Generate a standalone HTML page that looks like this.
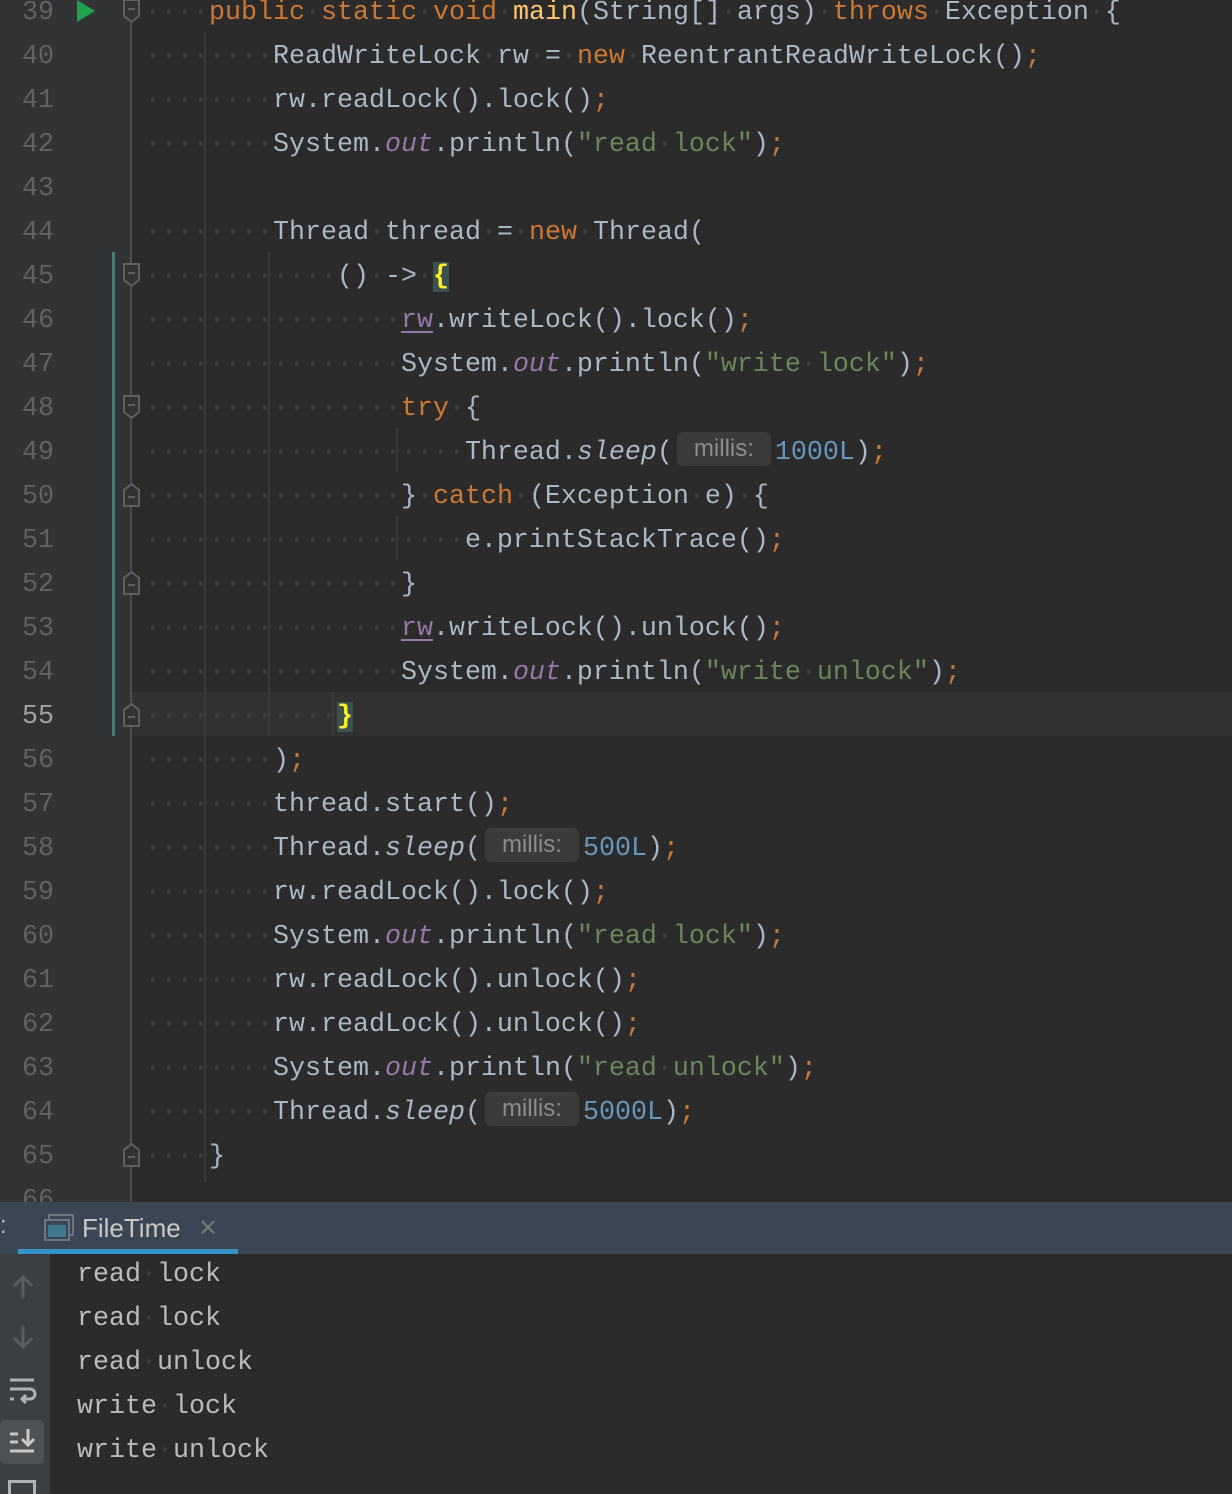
<!DOCTYPE html>
<html><head><meta charset="utf-8"><style>
*{margin:0;padding:0;box-sizing:border-box}
body{width:1232px;height:1494px;overflow:hidden;background:#2b2b2b;position:relative;font-family:"Liberation Mono",monospace;font-size:26.67px}
.gut{position:absolute;left:0;top:0;width:132px;height:1202px;background:#313335}
.hl{position:absolute;left:132px;top:692px;width:1100px;height:44px;background:#323232}
.ln{position:absolute;left:0;width:54px;text-align:right;color:#606366;line-height:44px;height:44px;margin-top:3px}
.c{position:absolute;left:145px;white-space:pre;line-height:44px;height:44px;color:#a9b7c6;margin-top:3px}
.d{color:#404346}
.k{color:#cc7832}
.f{color:#ffc66d}
.o{color:#9876aa;font-style:italic}
.s{color:#6a8759}
.n{color:#6897bb}
.it{font-style:italic}
.u{text-decoration:underline;text-underline-offset:4px}
.y{color:#ffef28;background:#3b514d;font-weight:bold}
.h{display:inline-block;width:94px;height:34px;line-height:34px;margin:0 4px 0 4px;background:#3b3b3b;border-radius:6px;color:#8c8c8c;font-family:"Liberation Sans",sans-serif;font-size:24px;text-align:center;vertical-align:middle;position:relative;top:-3px}
.g{position:absolute;width:2px;background:#393b3d}
.fold{position:absolute;left:123px}
.panel{position:absolute;left:0;top:1202px;width:1232px;height:52px;background:#3a4653}
.tb{position:absolute;left:0;top:1254px;width:50px;height:240px;background:#3c3f41}
.out{position:absolute;left:77px;white-space:pre;line-height:44px;color:#bbbbbb;margin-top:3px}
</style></head><body>
<div class="gut"></div>
<div class="hl"></div>
<div style="position:absolute;left:130px;top:0;width:2px;height:1202px;background:#4b4d4f"></div>
<div style="position:absolute;left:112px;top:252px;width:3px;height:484px;background:#4b7b74"></div>
<div class="g" style="left:204px;top:32px;height:1150px"></div>
<div class="g" style="left:268px;top:252px;height:484px"></div>
<div class="g" style="left:332px;top:692px;height:44px"></div>
<div class="g" style="left:396px;top:428px;height:44px"></div>
<div class="g" style="left:396px;top:516px;height:44px"></div>

<svg style="position:absolute;left:76px;top:0" width="20" height="24"><polygon points="1,0 19,11 1,22" fill="#1ea34a"/></svg>

<svg class="fold" style="top:-2px" width="18" height="26"><path d="M1,2 H16 V18 L8.5,24 L1,18 Z" fill="#313335" stroke="#5d6063" stroke-width="2"/><path d="M5,11 H12" stroke="#5d6063" stroke-width="2"/></svg>
<svg class="fold" style="top:262px" width="18" height="26"><path d="M1,2 H16 V18 L8.5,24 L1,18 Z" fill="#313335" stroke="#5d6063" stroke-width="2"/><path d="M5,11 H12" stroke="#5d6063" stroke-width="2"/></svg>
<svg class="fold" style="top:394px" width="18" height="26"><path d="M1,2 H16 V18 L8.5,24 L1,18 Z" fill="#313335" stroke="#5d6063" stroke-width="2"/><path d="M5,11 H12" stroke="#5d6063" stroke-width="2"/></svg>
<svg class="fold" style="top:482px" width="18" height="26"><path d="M1,24 H16 V8 L8.5,2 L1,8 Z" fill="#313335" stroke="#5d6063" stroke-width="2"/><path d="M5,15 H12" stroke="#5d6063" stroke-width="2"/></svg>
<svg class="fold" style="top:570px" width="18" height="26"><path d="M1,24 H16 V8 L8.5,2 L1,8 Z" fill="#313335" stroke="#5d6063" stroke-width="2"/><path d="M5,15 H12" stroke="#5d6063" stroke-width="2"/></svg>
<svg class="fold" style="top:702px" width="18" height="26"><path d="M1,24 H16 V8 L8.5,2 L1,8 Z" fill="#313335" stroke="#5d6063" stroke-width="2"/><path d="M5,15 H12" stroke="#5d6063" stroke-width="2"/></svg>
<svg class="fold" style="top:1142px" width="18" height="26"><path d="M1,24 H16 V8 L8.5,2 L1,8 Z" fill="#313335" stroke="#5d6063" stroke-width="2"/><path d="M5,15 H12" stroke="#5d6063" stroke-width="2"/></svg>

<div class="ln" style="top:-12px">39</div>
<div class="ln" style="top:32px">40</div>
<div class="ln" style="top:76px">41</div>
<div class="ln" style="top:120px">42</div>
<div class="ln" style="top:164px">43</div>
<div class="ln" style="top:208px">44</div>
<div class="ln" style="top:252px">45</div>
<div class="ln" style="top:296px">46</div>
<div class="ln" style="top:340px">47</div>
<div class="ln" style="top:384px">48</div>
<div class="ln" style="top:428px">49</div>
<div class="ln" style="top:472px">50</div>
<div class="ln" style="top:516px">51</div>
<div class="ln" style="top:560px">52</div>
<div class="ln" style="top:604px">53</div>
<div class="ln" style="top:648px">54</div>
<div class="ln" style="top:692px;color:#a4a3a3">55</div>
<div class="ln" style="top:736px">56</div>
<div class="ln" style="top:780px">57</div>
<div class="ln" style="top:824px">58</div>
<div class="ln" style="top:868px">59</div>
<div class="ln" style="top:912px">60</div>
<div class="ln" style="top:956px">61</div>
<div class="ln" style="top:1000px">62</div>
<div class="ln" style="top:1044px">63</div>
<div class="ln" style="top:1088px">64</div>
<div class="ln" style="top:1132px">65</div>
<div class="ln" style="top:1176px">66</div>

<div class="c" style="top:-12px"><span class="d">····</span><span class="k">public</span><span class="d">·</span><span class="k">static</span><span class="d">·</span><span class="k">void</span><span class="d">·</span><span class="f">main</span>(String[]<span class="d">·</span>args)<span class="d">·</span><span class="k">throws</span><span class="d">·</span>Exception<span class="d">·</span>{</div>
<div class="c" style="top:32px"><span class="d">········</span>ReadWriteLock<span class="d">·</span>rw<span class="d">·</span>=<span class="d">·</span><span class="k">new</span><span class="d">·</span>ReentrantReadWriteLock()<span class="k">;</span></div>
<div class="c" style="top:76px"><span class="d">········</span>rw.readLock().lock()<span class="k">;</span></div>
<div class="c" style="top:120px"><span class="d">········</span>System.<span class="o">out</span>.println(<span class="s">"read<span class="d">·</span>lock"</span>)<span class="k">;</span></div>
<div class="c" style="top:208px"><span class="d">········</span>Thread<span class="d">·</span>thread<span class="d">·</span>=<span class="d">·</span><span class="k">new</span><span class="d">·</span>Thread(</div>
<div class="c" style="top:252px"><span class="d">············</span>()<span class="d">·</span>-&gt;<span class="d">·</span><span class="y">{</span></div>
<div class="c" style="top:296px"><span class="d">················</span><span class="o u" style="font-style:normal">rw</span>.writeLock().lock()<span class="k">;</span></div>
<div class="c" style="top:340px"><span class="d">················</span>System.<span class="o">out</span>.println(<span class="s">"write<span class="d">·</span>lock"</span>)<span class="k">;</span></div>
<div class="c" style="top:384px"><span class="d">················</span><span class="k">try</span><span class="d">·</span>{</div>
<div class="c" style="top:428px"><span class="d">····················</span>Thread.<span class="it">sleep</span>(<span class="h">millis:</span><span class="n">1000L</span>)<span class="k">;</span></div>
<div class="c" style="top:472px"><span class="d">················</span>}<span class="d">·</span><span class="k">catch</span><span class="d">·</span>(Exception<span class="d">·</span>e)<span class="d">·</span>{</div>
<div class="c" style="top:516px"><span class="d">····················</span>e.printStackTrace()<span class="k">;</span></div>
<div class="c" style="top:560px"><span class="d">················</span>}</div>
<div class="c" style="top:604px"><span class="d">················</span><span class="o u" style="font-style:normal">rw</span>.writeLock().unlock()<span class="k">;</span></div>
<div class="c" style="top:648px"><span class="d">················</span>System.<span class="o">out</span>.println(<span class="s">"write<span class="d">·</span>unlock"</span>)<span class="k">;</span></div>
<div class="c" style="top:692px"><span class="d">············</span><span class="y">}</span></div>
<div class="c" style="top:736px"><span class="d">········</span>)<span class="k">;</span></div>
<div class="c" style="top:780px"><span class="d">········</span>thread.start()<span class="k">;</span></div>
<div class="c" style="top:824px"><span class="d">········</span>Thread.<span class="it">sleep</span>(<span class="h">millis:</span><span class="n">500L</span>)<span class="k">;</span></div>
<div class="c" style="top:868px"><span class="d">········</span>rw.readLock().lock()<span class="k">;</span></div>
<div class="c" style="top:912px"><span class="d">········</span>System.<span class="o">out</span>.println(<span class="s">"read<span class="d">·</span>lock"</span>)<span class="k">;</span></div>
<div class="c" style="top:956px"><span class="d">········</span>rw.readLock().unlock()<span class="k">;</span></div>
<div class="c" style="top:1000px"><span class="d">········</span>rw.readLock().unlock()<span class="k">;</span></div>
<div class="c" style="top:1044px"><span class="d">········</span>System.<span class="o">out</span>.println(<span class="s">"read<span class="d">·</span>unlock"</span>)<span class="k">;</span></div>
<div class="c" style="top:1088px"><span class="d">········</span>Thread.<span class="it">sleep</span>(<span class="h">millis:</span><span class="n">5000L</span>)<span class="k">;</span></div>
<div class="c" style="top:1132px"><span class="d">····</span>}</div>

<div class="panel">
  <div style="position:absolute;left:0;top:10px;color:#bbb;font-family:'Liberation Sans',sans-serif;font-size:24px">:</div>
  <svg style="position:absolute;left:44px;top:12px" width="30" height="28"><rect x="5" y="1" width="24" height="20" fill="none" stroke="#6b7680" stroke-width="2"/><rect x="1" y="6" width="24" height="20" fill="#3a4653" stroke="#6b7680" stroke-width="2"/><rect x="4" y="11" width="18" height="12" fill="#3e7891"/></svg>
  <div style="position:absolute;left:82px;top:11px;color:#c8c8c8;font-family:'Liberation Sans',sans-serif;font-size:26px">FileTime</div>
  <div style="position:absolute;left:198px;top:12px;color:#6f7780;font-family:'Liberation Sans',sans-serif;font-size:24px">✕</div>
  <div style="position:absolute;left:18px;top:47px;width:220px;height:5px;background:#3592c4"></div>
</div>
<div class="tb">
  <svg style="position:absolute;left:10px;top:20px" width="26" height="26"><path d="M13,24 V3 M4,12 L13,3 L22,12" fill="none" stroke="#5a5d60" stroke-width="3"/></svg>
  <svg style="position:absolute;left:10px;top:70px" width="26" height="26"><path d="M13,2 V23 M4,14 L13,23 L22,14" fill="none" stroke="#5a5d60" stroke-width="3"/></svg>
  <svg style="position:absolute;left:8px;top:122px" width="30" height="30"><path d="M2,4 H26 M2,13 H22 A5,5 0 0 1 22,23 H14 M18,19 L14,23 L18,27 M2,23 H6" fill="none" stroke="#afb1b3" stroke-width="3"/></svg>
  <div style="position:absolute;left:0;top:166px;width:44px;height:44px;background:#4e5254;border-radius:5px"></div>
  <svg style="position:absolute;left:8px;top:172px" width="30" height="30"><path d="M2,8 H10 M2,16 H10 M2,25 H26 M20,3 V19 M14,13 L20,19 L26,13" fill="none" stroke="#c8c8c8" stroke-width="3"/></svg>
  <div style="position:absolute;left:8px;top:226px;width:28px;height:14px;border:3px solid #afb1b3;border-bottom:none"></div>
</div>
<div class="out" style="top:1250px">read<span class="d">·</span>lock</div>
<div class="out" style="top:1294px">read<span class="d">·</span>lock</div>
<div class="out" style="top:1338px">read<span class="d">·</span>unlock</div>
<div class="out" style="top:1382px">write<span class="d">·</span>lock</div>
<div class="out" style="top:1426px">write<span class="d">·</span>unlock</div>
</body></html>
